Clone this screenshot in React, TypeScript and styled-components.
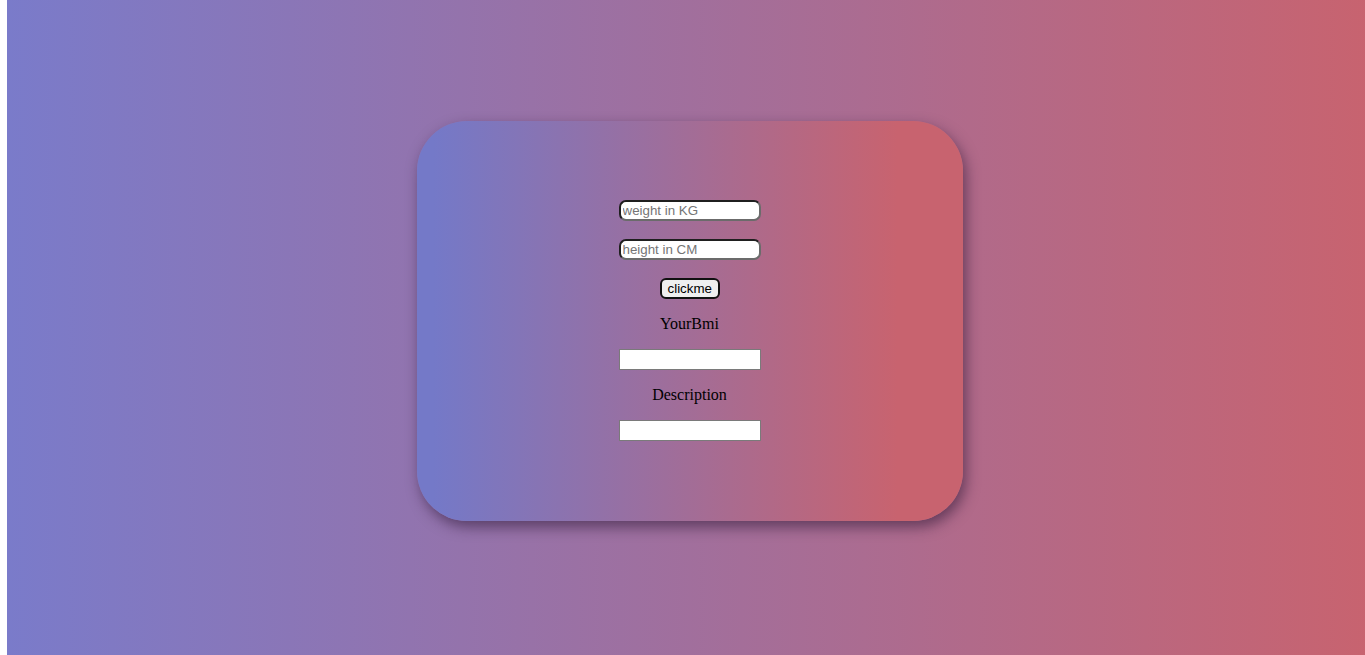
import React from 'react';
import styled, { createGlobalStyle } from 'styled-components';

const GlobalStyle = createGlobalStyle`
  html, body {
    margin: 0;
    padding: 0;
    background: #ffffff;
    overflow: hidden;
  }
`;

const Page = styled.div`
  margin-left: 7px;
  width: 1365px;
  height: 655px;
  padding-top: 121px;
  box-sizing: border-box;
  background: linear-gradient(to right, #7a7bca, #c8636f);
`;

const Card = styled.div`
  width: 546px;
  height: 400px;
  margin: 0 auto;
  padding-top: 79px;
  box-sizing: border-box;
  border-radius: 50px;
  background: linear-gradient(to right, #7479c8 3%, #c8636f 88%);
  box-shadow: 3px 6px 14px rgba(40, 20, 50, 0.55);
  display: flex;
  flex-direction: column;
  align-items: center;
`;

const WeightInput = styled.input<{ $gap: number }>`
  width: 142px;
  height: 21px;
  box-sizing: border-box;
  margin: 0 0 ${({ $gap }) => $gap}px;
  padding: 0 2px;
  border: 2px solid;
  border-color: #1f1f1f #6b6b6b #6b6b6b #1f1f1f;
  border-radius: 7px;
  background: #ffffff;
  font-family: 'Liberation Sans', Arial, sans-serif;
  font-size: 13.33px;
  color: #000;
  outline: none;

  &::placeholder {
    color: #757575;
  }
`;

const ClickButton = styled.button`
  height: 21px;
  width: 60px;
  box-sizing: border-box;
  margin: 0 0 16px;
  padding: 0 6px;
  border: 2px solid #111111;
  border-radius: 6px;
  background: #efefef;
  font-family: 'Liberation Sans', Arial, sans-serif;
  font-size: 13.33px;
  color: #000;
`;

const Label = styled.div`
  height: 18px;
  line-height: 18px;
  margin-bottom: 16px;
  font-family: 'Liberation Serif', 'Times New Roman', serif;
  font-size: 16px;
  color: #000;
`;

const ResultBox = styled.input`
  width: 142px;
  height: 21px;
  box-sizing: border-box;
  margin: 0 0 16px;
  padding: 1px 2px;
  border: 1px solid #7a7a7a;
  background: #ffffff;
  font-family: 'Liberation Sans', Arial, sans-serif;
  font-size: 13.33px;
  outline: none;
`;

export default function App() {
  return (
    <>
      <GlobalStyle />
      <Page>
        <Card>
          <WeightInput $gap={18} type="text" placeholder="weight in KG" />
          <WeightInput $gap={18} type="text" placeholder="height in CM" />
          <ClickButton type="button">clickme</ClickButton>
          <Label>YourBmi</Label>
          <ResultBox type="text" readOnly />
          <Label>Description</Label>
          <ResultBox type="text" readOnly />
        </Card>
      </Page>
    </>
  );
}
